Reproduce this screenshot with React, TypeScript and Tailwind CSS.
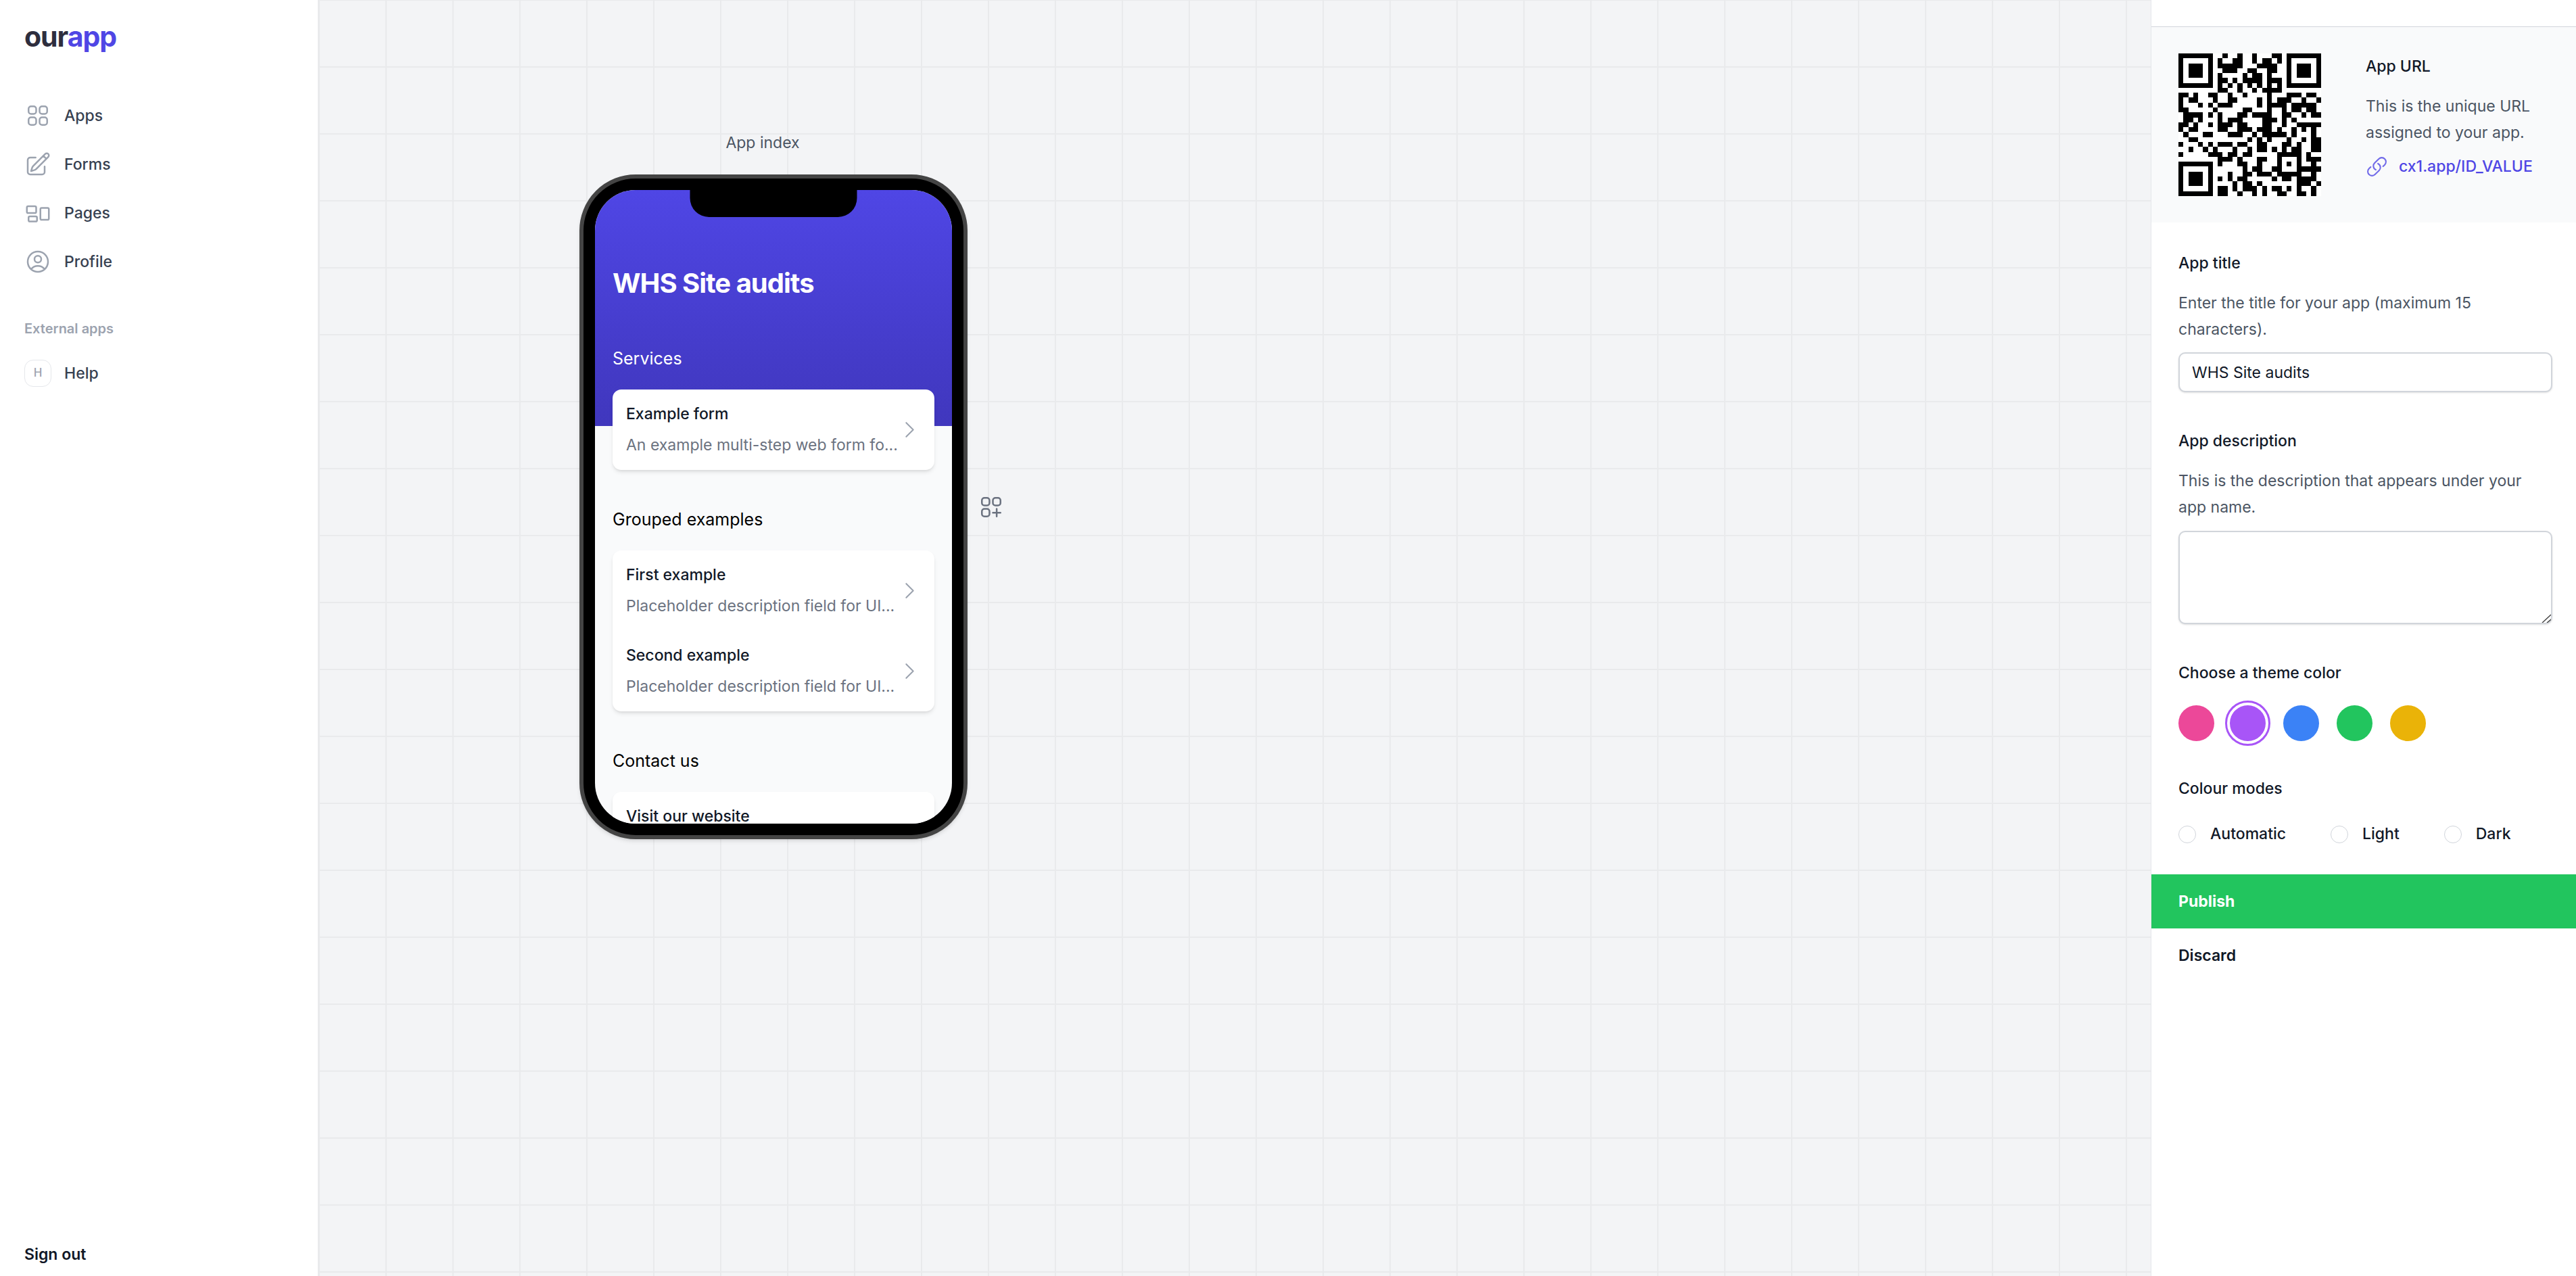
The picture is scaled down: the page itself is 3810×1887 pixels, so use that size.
import { useState } from "react";
import type { ReactNode } from "react";
import type { IconType } from "react-icons";
import {
  HiOutlineChevronRight,
  HiOutlineLink,
  HiOutlinePencilSquare,
  HiOutlineRectangleGroup,
  HiOutlineSquares2X2,
  HiOutlineSquaresPlus,
  HiOutlineUserCircle,
} from "react-icons/hi2";

const NAV: { name: string; icon: IconType }[] = [
  { name: "Apps", icon: HiOutlineSquares2X2 },
  { name: "Forms", icon: HiOutlinePencilSquare },
  { name: "Pages", icon: HiOutlineRectangleGroup },
  { name: "Profile", icon: HiOutlineUserCircle },
];

// Dark modules of each QR row, as column numbers and ranges.
const QR_ROWS = [
  "0-6 9 12 15 19-20 22-28",
  "0 6 8 11-12 15 17-18 20 22 28",
  "0 2-4 6 8-12 16-19 22 24-26 28",
  "0 2-4 6 9-11 14-15 18-19 22 24-26 28",
  "0 2-4 6 8 13 15-16 18 22 24-26 28",
  "0 6 8-9 11 13-16 18-20 22 28",
  "0-6 8 10 12 14 16 18 20 22-28",
  "8-9 12 15 17-20",
  "0-1 3 6-7 10 13 18 22-24 26-27",
  "0 2-3 7 10-11 16 18 20-22 25 28",
  "0 4 6 8-10 16 18-21 23-27",
  "0-1 7 13-14 18 21 23-24 26-27",
  "1-4 6 8 12-13 15-18 21-22 25 27-28",
  "1-2 4 8 10-12 17-19 21 23",
  "0-1 3 6 8-10 12-13 17-18 21 24-28",
  "0 2-3 8-9 12-14 16-18 20 23 25 27",
  "1 5-6 10-12 15 17-21 23 27",
  "2-3 14 16 18 22 25 27-28",
  "0 4 6 8-10 12-13 16-17 21-22 24 27-28",
  "2 5 7 11 14 16-17 19 21 23-24 27-28",
  "0 6-8 10-11 13-14 20-24 26",
  "8-10 12 16-17 20 24 26-28",
  "0-6 8 12-13 16 20 22 24 27",
  "0 6 13 15-16 19-20 24-28",
  "0 2-4 6 10 13-14 16-18 20-24 27",
  "0 2-4 6 8 10 12-13 19 21-22 24-27",
  "0 2-4 6 11 13-14 16 24-26 28",
  "0 6 8-9 11 13-15 17 19-20 22 24 27",
  "0-6 8-9 12 15 17 20-21 24-25 27",
];

const QR_PATH = QR_ROWS.map((row, y) =>
  row
    .split(" ")
    .map((run) => {
      const [from, to = from] = run.split("-").map(Number);
      return `M${from} ${y}h${to - from + 1}v1H${from}z`;
    })
    .join(""),
).join("");

const COLORS = [
  { name: "Pink", bg: "bg-[#ec4899]", ring: "border-[#ec4899]" },
  { name: "Purple", bg: "bg-[#a855f7]", ring: "border-[#a855f7]" },
  { name: "Blue", bg: "bg-[#3b82f6]", ring: "border-[#3b82f6]" },
  { name: "Green", bg: "bg-[#22c55e]", ring: "border-[#22c55e]" },
  { name: "Yellow", bg: "bg-[#eab308]", ring: "border-[#eab308]" },
];

function Sidebar() {
  return (
    <aside className="flex w-[473px] shrink-0 flex-col border-r-3 border-[#e9eaec] bg-white px-9">
      <a href="#" className="mt-7 text-[41px] leading-[53px] font-bold tracking-tight text-[#2e2e3e]">
        our<span className="text-[#4f46e5]">app</span>
      </a>
      <nav className="mt-[54px] flex grow flex-col">
        <ul>
          {NAV.map(({ name, icon: Icon }) => (
            <li key={name}>
              <a href="#" className="flex h-[72px] items-center gap-[19px] text-[23px] font-medium text-[#374151]">
                <Icon className="size-10 text-[#9ca3af]" />
                {name}
              </a>
            </li>
          ))}
        </ul>
        <h2 className="mt-[45px] text-[20px] leading-[36px] font-semibold text-[#9ca3af]">External apps</h2>
        <a href="#" className="mt-3 flex h-[72px] items-center gap-[19px] text-[23px] font-medium text-[#374151]">
          <span className="flex size-10 items-center justify-center rounded-[13px] border border-[#e5e7eb] text-[17px] font-medium text-[#9ca3af]">
            H
          </span>
          Help
        </a>
      </nav>
      <a href="#" className="mb-3 text-[23px] leading-[40px] font-semibold text-[#111827]">
        Sign out
      </a>
    </aside>
  );
}

function Row({ title, text }: { title: string; text?: string }) {
  return (
    <a href="#" className="flex min-h-[119px] items-center p-5">
      <span className="flex min-w-0 grow flex-col gap-[13px] self-start text-[23px] leading-[33px] whitespace-nowrap">
        <span className="font-medium text-[#111827]">{title}</span>
        {text && <span className="text-[#6b7280]">{text}</span>}
      </span>
      <HiOutlineChevronRight className="size-[33px] shrink-0 text-[#9ca3af]" />
    </a>
  );
}

function Group({ title, children }: { title: string; children: ReactNode }) {
  return (
    <section className="flex flex-col gap-[26px]">
      <h3 className="text-[25px] leading-[40px]">{title}</h3>
      <div className="rounded-[13px] bg-white text-black shadow-md">{children}</div>
    </section>
  );
}

function Phone({ title }: { title: string }) {
  return (
    <div className="rounded-[83px] border-6 border-[#444] bg-black p-[17px] shadow-md">
      <div className="relative h-[937px] w-[528px] overflow-hidden rounded-[60px] bg-[#f9fafb]">
        <div className="absolute inset-x-0 top-0 h-[349px] bg-linear-to-b from-[#4f46e5] to-[#4037bd]" />
        <div className="absolute top-0 left-1/2 h-10 w-[247px] -translate-x-1/2 rounded-b-[28px] bg-black" />
        <div className="relative flex flex-col px-[26px] pt-[111px]">
          <h2 className="text-[40px] leading-[53px] font-bold tracking-tight text-white">{title}</h2>
          <div className="mt-[65px] flex flex-col gap-[53px] text-black first-of-type:*:first:text-white">
            <Group title="Services">
              <Row title="Example form" text="An example multi-step web form fo..." />
            </Group>
            <Group title="Grouped examples">
              <Row title="First example" text="Placeholder description field for UI..." />
              <Row title="Second example" text="Placeholder description field for UI..." />
            </Group>
            <Group title="Contact us">
              <Row title="Visit our website" />
            </Group>
          </div>
        </div>
      </div>
    </div>
  );
}

function Canvas({ title }: { title: string }) {
  return (
    <main className="min-w-0 grow overflow-hidden bg-[#f3f4f6] bg-[linear-gradient(#e9eaec_2px,transparent_2px),linear-gradient(90deg,#e9eaec_2px,transparent_2px)] bg-size-[99px_99px] bg-position-[-2px_-1px] pl-96">
      <div className="flex items-center gap-[15px] pt-[191px]">
        <figure className="flex flex-col">
          <figcaption className="mb-[27px] pr-8 text-center text-[23px] leading-[40px] text-[#4b5563]">
            App index
          </figcaption>
          <Phone title={title} />
        </figure>
        <button type="button" aria-label="Add page" className="mt-[67px] text-[#6b7280]">
          <HiOutlineSquaresPlus className="size-10" />
        </button>
      </div>
    </main>
  );
}

function Settings({ title, onTitle }: { title: string; onTitle: (value: string) => void }) {
  const [color, setColor] = useState("Purple");
  const field = "block w-full rounded-[10px] border-2 border-[#d1d5db] bg-white px-[18px] text-[#111827] shadow-sm";
  return (
    <aside className="w-[629px] shrink-0 border-l border-[#e5e7eb] bg-white text-[23px] leading-[39px] text-[#111827]">
      <div className="h-10 border-b border-[#d1d5db]" />
      <section className="flex items-start gap-[66px] bg-[#f9fafb] px-10 py-[39px]">
        <svg viewBox="0 0 29 29" role="img" aria-label="QR code" className="size-[211px] shrink-0 bg-white" shapeRendering="crispEdges">
          <path d={QR_PATH} fill="#000" />
        </svg>
        <div>
          <h2 className="font-medium">App URL</h2>
          <p className="mt-5 text-[#4b5563]">
            This is the unique URL
            <br />
            assigned to your app.
          </p>
          <a href="#" className="mt-[11px] flex items-center gap-4 font-medium text-[#4f46e5]">
            <HiOutlineLink className="size-[33px] opacity-80" />
            cx1.app/ID_VALUE
          </a>
        </div>
      </section>
      <form onSubmit={(event) => event.preventDefault()}>
        <div className="px-10 pt-[41px] pb-10">
          <div className="-mr-[5px]">
            <label htmlFor="title" className="block font-medium">App title</label>
            <p className="mt-5 text-[#4b5563]">Enter the title for your app (maximum 15 characters).</p>
            <input id="title" value={title} onChange={(event) => onTitle(event.target.value)} className={`${field} mt-[14px] h-[59px]`} />

            <label htmlFor="description" className="mt-[53px] block font-medium">App description</label>
            <p className="mt-5 text-[#4b5563]">This is the description that appears under your app name.</p>
            <div className="relative mt-[15px]">
              <textarea id="description" className={`${field} h-[138px] resize-none`} />
              <svg viewBox="0 0 14 14" aria-hidden="true" className="pointer-events-none absolute right-[2px] bottom-[2px] size-[14px]">
                <path d="M1 14 14 2M8 14l6-5" fill="none" stroke="#444" strokeWidth="1.4" />
              </svg>
            </div>
          </div>

          <fieldset className="mt-[53px]">
            <legend className="font-medium">Choose a theme color</legend>
            <div className="mt-[25px] flex gap-5">
              {COLORS.map(({ name, bg, ring }) => (
                <label key={name} className="relative block p-[3px] first:-mx-[3px]">
                  <input
                    type="radio"
                    name="color"
                    aria-label={name}
                    checked={color === name}
                    onChange={() => setColor(name)}
                    className={`block size-[53px] appearance-none rounded-full ${bg}`}
                  />
                  {color === name && <span className={`absolute -inset-1 rounded-full border-3 ${ring}`} />}
                </label>
              ))}
            </div>
          </fieldset>

          <fieldset className="mt-12">
            <legend className="font-medium">Colour modes</legend>
            <div className="mt-7 flex gap-[66px]">
              {["Automatic", "Light", "Dark"].map((mode) => (
                <label key={mode} className="flex items-center gap-[21px] font-medium">
                  <input type="radio" name="mode" className="size-[26px] appearance-none rounded-full border border-[#d1d5db] checked:border-8 checked:border-[#4f46e5]" />
                  {mode}
                </label>
              ))}
            </div>
          </fieldset>
        </div>
        <button type="submit" className="block h-20 w-full bg-[#22c55e] px-10 text-left font-bold text-white">
          Publish
        </button>
        <button type="button" className="block h-20 w-full px-10 text-left font-semibold">
          Discard
        </button>
      </form>
    </aside>
  );
}

export default function App() {
  const [title, setTitle] = useState("WHS Site audits");
  return (
    <div className="flex min-h-screen font-['Inter',sans-serif]">
      <Sidebar />
      <Canvas title={title} />
      <Settings title={title} onTitle={setTitle} />
    </div>
  );
}
